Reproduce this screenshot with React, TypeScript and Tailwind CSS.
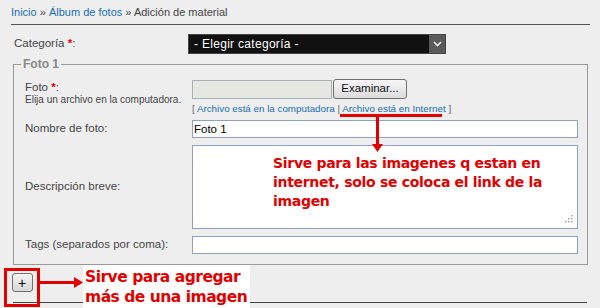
export default function App() {
  return (
    <div className="relative w-[600px] h-[308px] overflow-hidden bg-[#eeeeee] font-['Liberation_Sans',Arial,sans-serif] text-[11px] text-[#444]">
      {/* breadcrumb */}
      <div className="pl-[11px] pt-[6px] h-[24px] leading-[13px] text-[11px] text-[#444]">
        <span className="text-[#1a6fb3]">Inicio</span> » <span className="text-[#1a6fb3]">Álbum de fotos</span> » Adición de material
      </div>
      <div className="ml-[11px] w-[579px] h-px bg-[#555]" />

      {/* category */}
      <div className="mt-[9px] flex items-center h-[20px]">
        <div className="w-[188px] pl-[14px] text-[11.5px] text-[#444]">
          Categoría <span className="text-[#d00] font-bold">*</span>:
        </div>
        <div className="flex h-[20px] w-[258px] border border-[#444] bg-[#111]">
          <div className="flex-1 pl-[5px] text-white text-[12px] leading-[18px] tracking-[0.3px]">- Elegir categoría -</div>
          <div className="w-[16px] bg-[#5a5a5a] flex items-center justify-center">
            <svg width="9" height="6" viewBox="0 0 9 6"><path d="M1 1 L4.5 4.5 L8 1" stroke="#eee" strokeWidth="1.6" fill="none" /></svg>
          </div>
        </div>
      </div>

      {/* fieldset */}
      <fieldset className="mt-[3px] ml-[13px] w-[575px] border border-[#9a9a9a] pl-[11px] pr-[9px] pb-[10px]">
        <legend className="-ml-[4px] px-[2px] text-[12px] font-bold text-[#888] leading-[14px]">Foto 1</legend>

        <div className="mt-[8px] grid grid-cols-[167px_1fr]">
          <div className="pt-[2px]">
            <div className="text-[11.5px] leading-[12px]">Foto <span className="text-[#d00] font-bold">*</span>:</div>
            <div className="text-[10px] leading-[12px] mt-[1px]">Elija un archivo en la computadora.</div>
          </div>
          <div>
            <div className="flex items-center">
              <div className="w-[140px] h-[19px] border border-[#a8b0b8] bg-[#e6e6e2]" />
              <div className="ml-[1px] w-[74px] h-[20px] rounded-[3px] border border-[#707070] bg-gradient-to-b from-[#f6f6f6] to-[#dcdcdc] text-[11.5px] text-[#111] flex items-center justify-center">Examinar...</div>
            </div>
            <div className="mt-[3px] text-[9.8px] leading-[13px] text-[#666] whitespace-nowrap">
              [ <span className="text-[#1a6fb3]">Archivo está en la computadora</span> |{" "}
              <span className="relative text-[#1a6fb3]">
                Archivo está en Internet
                <span className="absolute -left-[2px] right-[4px] -bottom-[3px] h-[3px] bg-[#e00000]" />
              </span>{" "}
              ]
            </div>
          </div>
        </div>

        <div className="mt-[5px] grid grid-cols-[167px_1fr] items-center">
          <div className="text-[11.5px]">Nombre de foto:</div>
          <div className="h-[18px] border border-[#8ea2bb] bg-white text-[11.5px] text-black pl-[1px] leading-[16px]">Foto 1</div>
        </div>

        <div className="mt-[7px] grid grid-cols-[167px_1fr] items-center">
          <div className="text-[11.5px]">Descripción breve:</div>
          <div className="relative h-[84px] border border-[#8ea2bb] bg-white pl-[80px] pt-[8px]">
            <div className="font-['DejaVu_Sans',sans-serif] font-bold text-[14px] leading-[19px] text-[#e00000] tracking-[-0.3px]">
              Sirve para las imagenes q estan en<br />internet, solo se coloca el link de la<br />imagen
            </div>
            <svg className="absolute right-[4px] bottom-[5px]" width="9" height="9" viewBox="0 0 9 9">
              <g fill="#a0a0a0">
                <rect x="7" y="1" width="1.5" height="1.5" />
                <rect x="4" y="4" width="1.5" height="1.5" />
                <rect x="7" y="4" width="1.5" height="1.5" />
                <rect x="1" y="7" width="1.5" height="1.5" />
                <rect x="4" y="7" width="1.5" height="1.5" />
                <rect x="7" y="7" width="1.5" height="1.5" />
              </g>
            </svg>
          </div>
        </div>

        <div className="mt-[7px] grid grid-cols-[167px_1fr] items-center">
          <div className="text-[11.5px]">Tags (separados por coma):</div>
          <div className="h-[18px] border border-[#8ea2bb] bg-white" />
        </div>
      </fieldset>

      {/* bottom */}
      <div className="mt-[3px] ml-[4px] flex items-center">
        <div className="w-[36px] h-[39px] border-[3px] border-[#e00000] flex items-start justify-center pt-[2px]">
          <div className="w-[21px] h-[19px] rounded-[3px] border border-[#707070] bg-gradient-to-b from-[#f4f4f4] to-[#d8d8d8] flex items-center justify-center text-[14px] text-black leading-none">+</div>
        </div>
      </div>
      <div className="ml-[13px] mt-[-5px] w-[574px] h-px bg-[#444]" />

      {/* annotations */}
      <div className="absolute left-[376px] top-[115px] w-[3px] h-[32px] bg-[#e00000]" />
      <svg className="absolute left-[372px] top-[144px]" width="11" height="9" viewBox="0 0 11 9"><path d="M0 0 L11 0 L5.5 8 Z" fill="#e00000" /></svg>

      <div className="absolute left-[40px] top-[281px] w-[38px] h-[3px] bg-[#e00000]" />
      <svg className="absolute left-[74px] top-[277px]" width="10" height="11" viewBox="0 0 10 11"><path d="M0 0 L9 5.5 L0 11 Z" fill="#e00000" /></svg>

      <div className="absolute left-[83px] top-[265px] w-[167px] h-[43px] bg-white pl-[2px] pt-[2px]">
        <div className="font-['DejaVu_Sans',sans-serif] font-bold text-[15.5px] leading-[20px] text-[#e00000] tracking-[-0.5px] whitespace-nowrap">
          Sirve para agregar<br />más de una imagen
        </div>
      </div>
    </div>
  );
}
